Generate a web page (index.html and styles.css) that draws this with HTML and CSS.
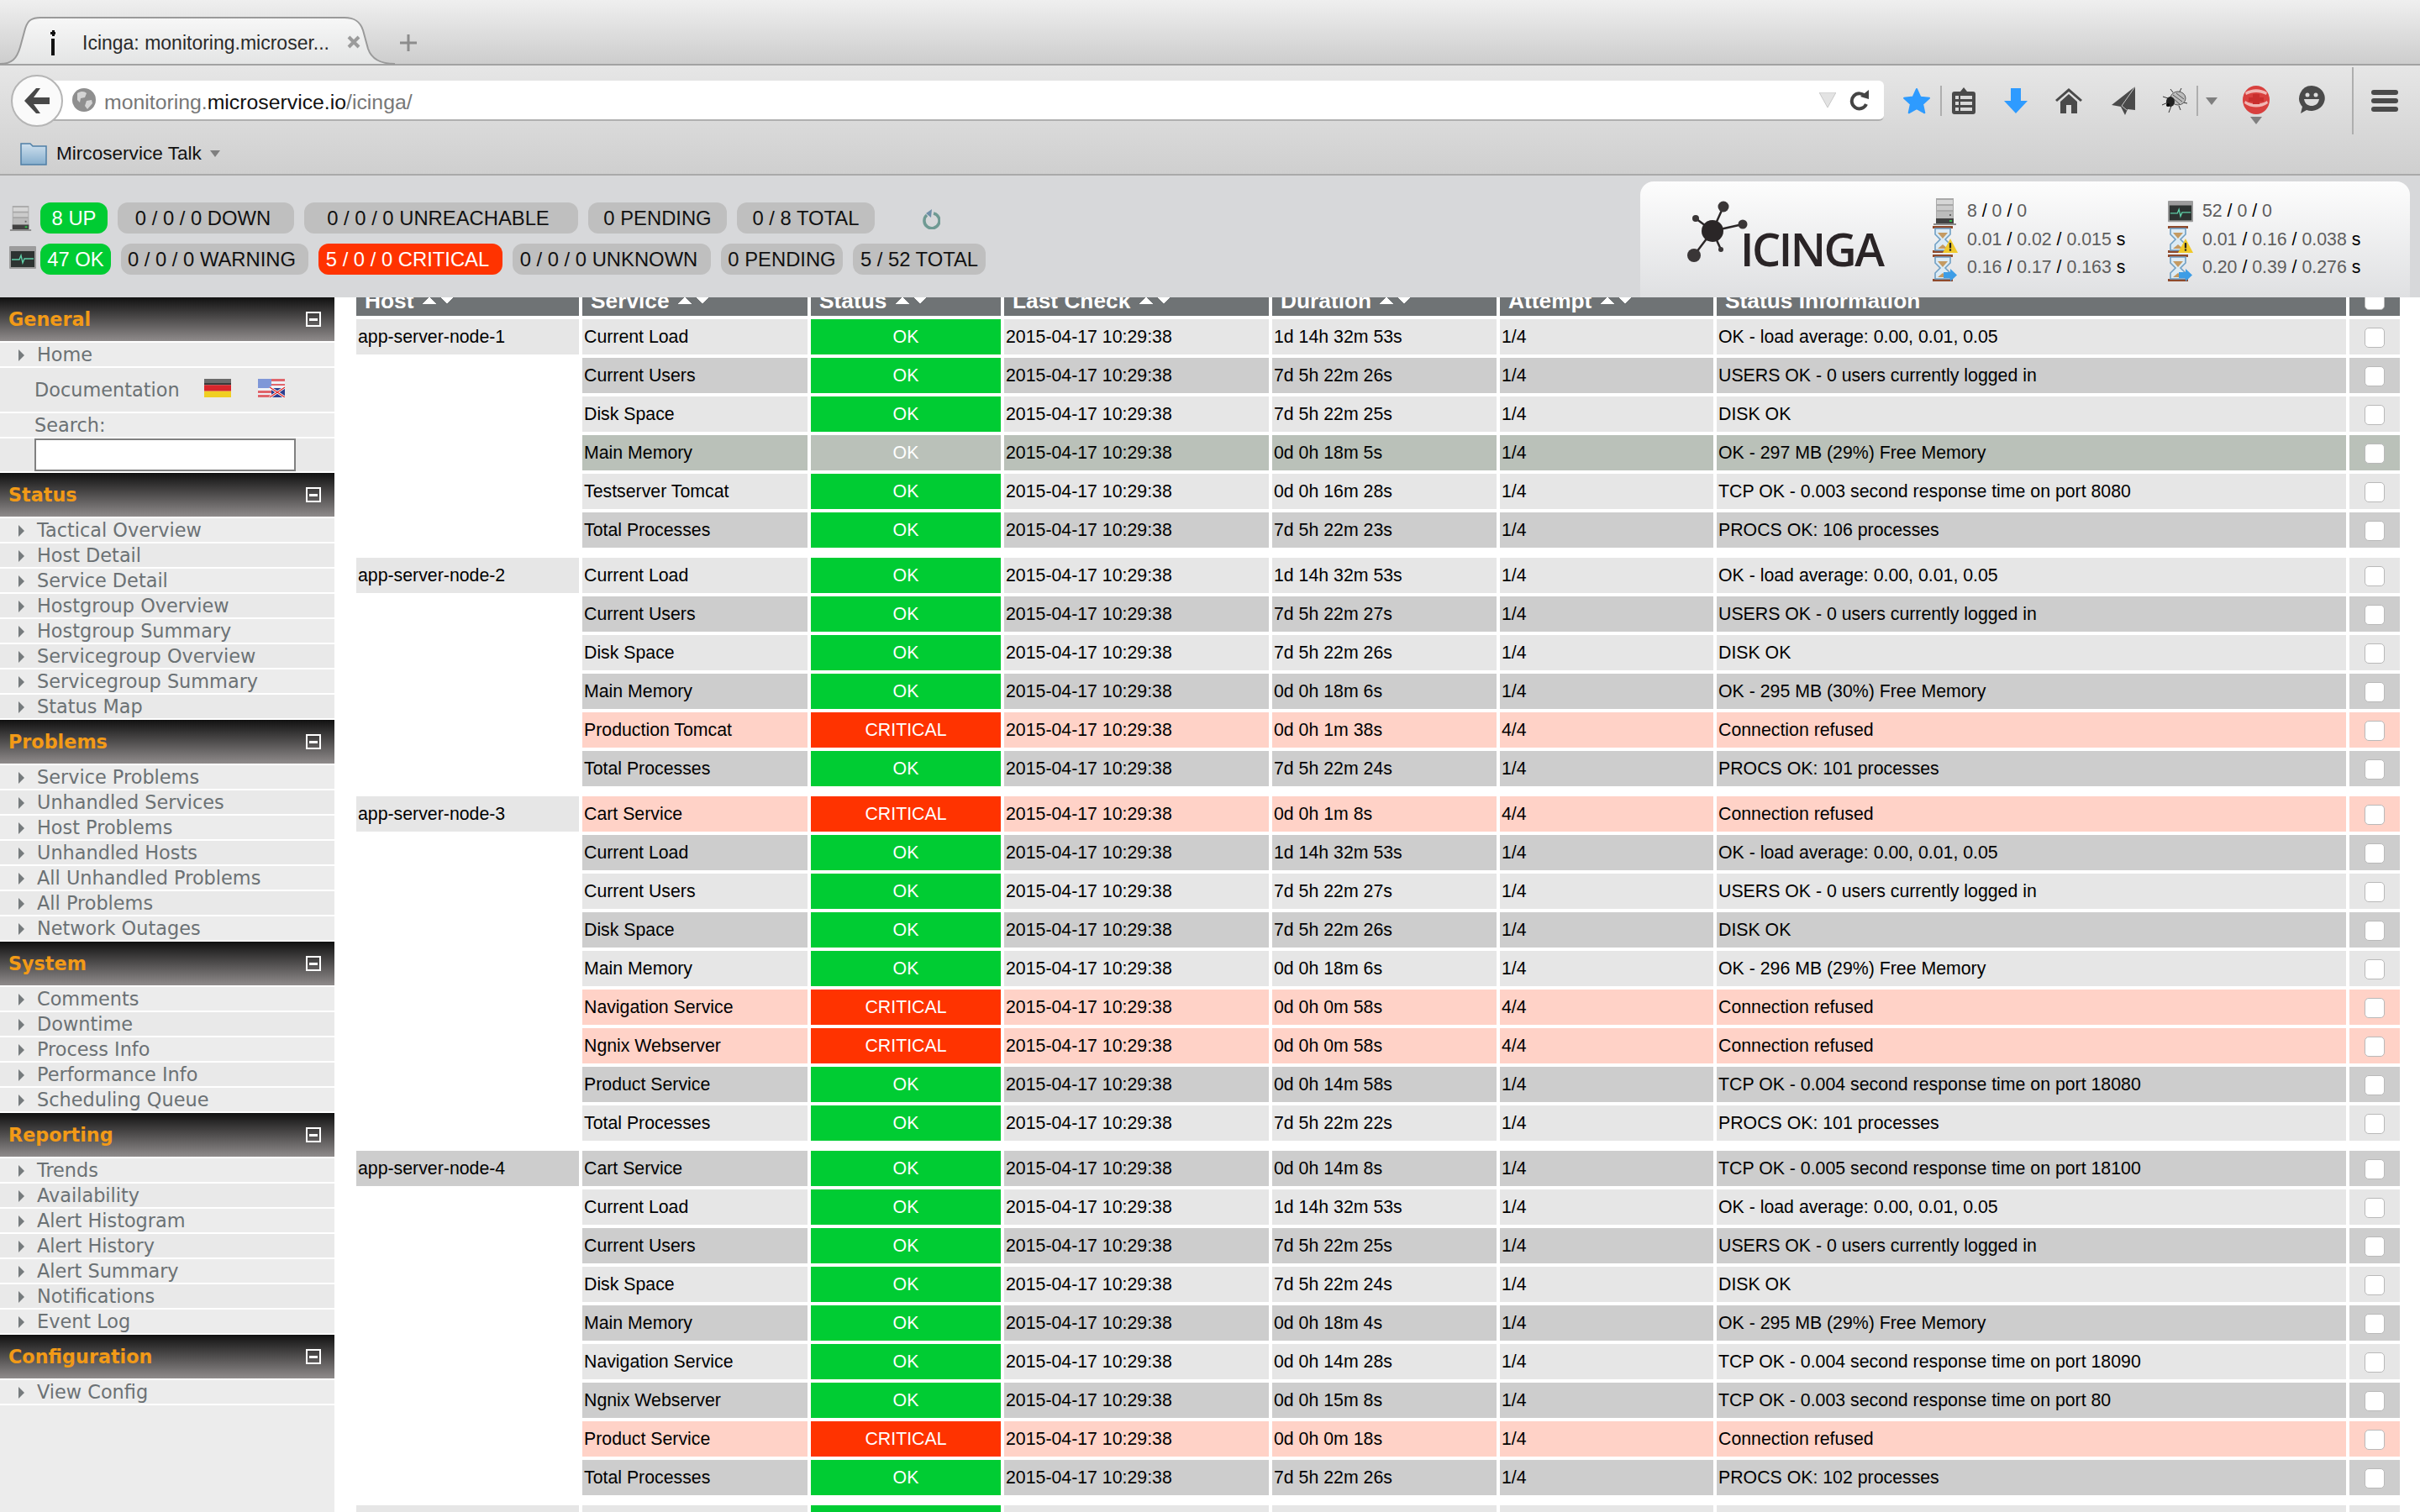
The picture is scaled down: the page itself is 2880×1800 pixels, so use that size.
FILE: index.html
```html
<!DOCTYPE html>
<html>
  <head>
    <title>Icinga: monitoring.microservice.io</title>
    <link rel="stylesheet" href="styles.css">
  </head>

  <body>
    <svg class="defs">
      <symbol id="ico-server" viewBox="0 0 30 32">
        <rect x="4" y="0" width="21" height="27" fill="#a9a9a9"/>
        <rect x="5" y="2" width="19" height="5" fill="#d6d6d6"/>
        <rect x="5" y="9" width="19" height="5" fill="#cbcbcb"/>
        <rect x="5" y="16" width="19" height="9" fill="#bcbcbc"/>
        <rect x="20" y="19" width="2" height="2" fill="#666"/>
        <rect x="4" y="24" width="21" height="6" fill="#414141"/>
        <rect x="20" y="26" width="3" height="2" fill="#2fc24a"/>
        <rect x="1" y="30" width="27" height="2" fill="#8a8a8a"/>
      </symbol>
      <symbol id="ico-monitor" viewBox="0 0 32 28">
        <rect x="0" y="0" width="32" height="27" rx="1" fill="#9c9c9c"/>
        <rect x="2" y="6" width="28" height="19" fill="#2d3331"/>
        <path d="M3 16h9l2-5 2 9 2-5h11" fill="none" stroke="#5fd0a8" stroke-width="1.4"/>
      </symbol>
      <symbol id="ico-glass" viewBox="0 0 30 32">
        <rect x="0" y="0" width="24" height="3" fill="#8f4a2c"/>
        <rect x="0" y="29" width="24" height="3" fill="#8f4a2c"/>
        <path d="M3 3h18v7l-6 6 6 6v7H3v-7l6-6-6-6z" fill="#dcebf5" stroke="#6f9fc4" stroke-width="1.6"/>
        <path d="M6 8h12l-6 7z" fill="#c49a62"/>
        <path d="M6 27l6-5 6 5z" fill="#c49a62"/>
      </symbol>
    </svg>

    <div class="strip">
      <div class="tab">
        <svg class="tab-shape" width="470" height="57" viewBox="0 0 470 57">
          <defs>
            <linearGradient id="tabfill" x1="0" y1="0" x2="0" y2="1">
              <stop offset="0" stop-color="#f7f7f7"/>
              <stop offset="1" stop-color="#e4e5e5"/>
            </linearGradient>
          </defs>
          <path d="M0 56C14 56 20 50 24 36L30 14C33 4 38 1 48 1L410 1C420 1 428 4 432 16L438 38C442 50 452 56 470 56" fill="url(#tabfill)" stroke="#9a9a9a" stroke-width="2"/>
        </svg>
        <svg class="favicon" width="6" height="30" viewBox="0 0 6 30">
          <rect x="0" y="2" width="6" height="3" fill="#111"/>
          <rect x="2" y="0" width="3" height="7" fill="#111"/>
          <rect x="1" y="10" width="4" height="20" fill="#111"/>
        </svg>
        <span class="tab-title">Icinga: monitoring.microser...</span>
        <svg class="tab-close" width="16" height="16" viewBox="0 0 16 16">
          <path d="M2 2l12 12M14 2L2 14" stroke="#9b9b9b" stroke-width="4"/>
        </svg>
      </div>
      <svg class="tab-new" width="20" height="20" viewBox="0 0 20 20">
        <path d="M10 0v20M0 10h20" stroke="#8c8c8c" stroke-width="3"/>
      </svg>
    </div>

    <div class="navbar">
      <div class="navrow">
        <div class="back">
          <svg width="30" height="30" viewBox="0 0 30 30">
            <path d="M14 0l5 0-8 11h19v8H11l8 11h-5L0 15z" fill="#484848"/>
          </svg>
        </div>
        <div class="urlbar">
          <svg class="globe" width="28" height="28" viewBox="0 0 28 28">
            <circle cx="14" cy="14" r="14" fill="#8f8f8f"/>
            <path d="M6 6c5-3 9-2 11 0l-2 5-5 1-1 5-3-3zM17 15l6-1 1 4-6 7-3-4z" fill="#d4d4d4"/>
          </svg>
          <span class="url"><span class="dim">monitoring.</span>microservice.io<span class="dim">/icinga/</span></span>
          <svg class="url-drop" width="20" height="18" viewBox="0 0 20 18">
            <path d="M0 0h20L10 18z" fill="#e3e3e3" stroke="#c8c8c8"/>
          </svg>
          <svg class="url-reload" width="24" height="26" viewBox="0 0 24 26">
            <path d="M19 9A9 9 0 1 0 20 18" fill="none" stroke="#444" stroke-width="4"/>
            <path d="M13 9L23 1v11z" fill="#444"/>
          </svg>
        </div>
        <div class="tools">
          <svg class="t-star" width="32" height="32" viewBox="0 0 32 32">
            <path d="M16 2l4.4 9.6 10.6 1.2-7.9 7.1 2.2 10.4L16 25.1 6.7 30.300l2.200-10.400L1 12.800l10.600-1.200z" fill="#2e9bff" stroke="#2e9bff" stroke-linejoin="round" stroke-width="2"/>
          </svg>
          <div class="t-sep s1"></div>
          <svg class="t-clip" width="28" height="32" viewBox="0 0 28 32">
            <path d="M3 5h7l4-5 4 5h7a3 3 0 0 1 3 3v21a3 3 0 0 1-3 3H3a3 3 0 0 1-3-3V8a3 3 0 0 1 3-3z" fill="#4a4a4a"/>
            <path d="M10 10h14v4H10zM10 17h14v4H10zM10 24h14v4H10z" fill="#d9d9d9"/>
            <path d="M4 10h4v4H4zM4 17h4v4H4zM4 24h4v4H4z" fill="#d9d9d9"/>
          </svg>
          <svg class="t-down" width="28" height="30" viewBox="0 0 28 30">
            <path d="M8 0h12v15h8L14 30 0 15h8z" fill="#2e9bff"/>
          </svg>
          <svg class="t-home" width="32" height="30" viewBox="0 0 32 30">
            <path d="M16 0l16 14-2 2L16 4 2 16l-2-2z" fill="#4a4a4a"/>
            <path d="M16 7l10 9v14h-7V20h-6v10H6V16z" fill="#4a4a4a"/>
          </svg>
          <svg class="t-send" width="28" height="34" viewBox="0 0 28 34">
            <path d="M28 0L0 22l11 2 5 10 3-7 9 1z" fill="#4a4a4a"/>
            <path d="M28 0L12 23l6 5" fill="none" stroke="#c9c9c9" stroke-width="1"/>
          </svg>
          <svg class="t-bug" width="32" height="30" viewBox="0 0 32 30">
            <path d="M8 12L2 10M8 17l-7 3M12 21l-3 8M20 6l7 1M22 16l9 2M21 21l2 5M14 5l-3-4M22 4l2-4" stroke="#333" fill="none"/>
            <ellipse cx="20" cy="12" rx="9" ry="8" fill="#bdbdbd" stroke="#555"/>
            <path d="M14 8l11 8M18 6l9 7M14 12l8 7" stroke="#555"/>
            <ellipse cx="11" cy="16" rx="5" ry="6" fill="#222"/>
            <circle cx="8" cy="20" r="2" fill="#000"/>
          </svg>
          <div class="t-sep s2"></div>
          <div class="t-tri tri1"></div>
          <div class="t-red">
            <svg width="32" height="34" viewBox="0 0 32 34">
              <ellipse cx="16" cy="17" rx="16" ry="17" fill="#d8403e"/>
              <path d="M3 8c8-5 18-5 26 0l-1 3c-8-4-16-4-24 0zM2 21c8 6 20 6 28 0l-1-3c-8 5-18 5-26 0z" fill="#f1b7b4"/>
              <path d="M12 10h8v4h5v5h-5v3h-8v-3H7v-5h5z" fill="#c92f2e"/>
            </svg>
            <div class="t-tri"></div>
          </div>
          <svg class="t-smile" width="32" height="34" viewBox="0 0 32 34">
            <path d="M16 0a16 15 0 1 1-6 29l-7 4 2-8A15 15 0 0 1 16 0z" fill="#4a4a4a"/>
            <circle cx="11" cy="11" r="2.500" fill="#ddd"/>
            <circle cx="21" cy="11" r="2.500" fill="#ddd"/>
            <path d="M7 16h18c-1 6-5 8-9 8s-8-2-9-8z" fill="#ddd"/>
          </svg>
          <div class="t-sep s3"></div>
          <div class="burger"><i></i><i></i><i></i></div>
        </div>
      </div>
      <div class="bookmarks">
        <svg width="32" height="28" viewBox="0 0 32 28">
          <defs>
            <linearGradient id="folder" x1="0" y1="0" x2="0" y2="1">
              <stop offset="0" stop-color="#cfe0ee"/>
              <stop offset="1" stop-color="#86aecd"/>
            </linearGradient>
          </defs>
          <path d="M1 2h11l3 3h16v22H1z" fill="url(#folder)" stroke="#4f7fa6" stroke-width="1.500"/>
        </svg>
        <span class="bm-label">Mircoservice Talk</span>
        <div class="t-tri small"></div>
      </div>
    </div>

    <div class="summary">
      <div class="totals">
        <div class="totals-row">
          <svg class="row-ico" width="28" height="32"><use href="#ico-server"/></svg>
          <span class="pill up w80">8 UP</span>
          <span class="pill lean w210">0 / 0 / 0 DOWN</span>
          <span class="pill lean w326">0 / 0 / 0 UNREACHABLE</span>
          <span class="pill w165">0 PENDING</span>
          <span class="pill w164">0 / 8 TOTAL</span>
          <svg class="refresh" width="22" height="24" viewBox="0 0 22 24">
            <path d="M6 7a9 9 0 1 0 8-2" fill="none" stroke="#6f9a93" stroke-width="3.500"/>
            <path d="M12 0l-1 10-6-5z" fill="#6f8fa8"/>
          </svg>
        </div>
        <div class="totals-row">
          <svg class="row-ico" width="32" height="28"><use href="#ico-monitor"/></svg>
          <span class="pill up w84">47 OK</span>
          <span class="pill lean w223">0 / 0 / 0 WARNING</span>
          <span class="pill lean crit w219">5 / 0 / 0 CRITICAL</span>
          <span class="pill lean w236">0 / 0 / 0 UNKNOWN</span>
          <span class="pill w145">0 PENDING</span>
          <span class="pill w158">5 / 52 TOTAL</span>
        </div>
      </div>

      <div class="panel">
        <div class="logo">
          <svg width="76" height="76" viewBox="0 0 76 76">
            <path d="M32 39L45 10M32 39L12 24M32 39L68 31M32 39L10 68M32 39L42 61" stroke="#2a2627" stroke-width="2.500"/>
            <circle cx="32" cy="39" r="13" fill="#2a2627"/>
            <circle cx="45" cy="10" r="6.500" fill="#3a3637"/>
            <circle cx="12" cy="24" r="4" fill="#3a3637"/>
            <circle cx="68" cy="31" r="5.500" fill="#3a3637"/>
            <circle cx="10" cy="68" r="8" fill="#3a3637"/>
            <circle cx="42" cy="61" r="3" fill="#3a3637"/>
          </svg>
          <span class="logo-text">ICINGA</span>
        </div>
        <div class="stats">
          <div class="stat-col">
            <div class="stat"><svg width="30" height="32"><use href="#ico-server"/></svg><span>8 <i>/</i> 0 <i>/</i> 0</span></div>
            <div class="stat"><div class="glass"><svg width="30" height="32"><use href="#ico-glass"/></svg><svg class="badge" width="18" height="17" viewBox="0 0 16 15"><path d="M8 0l8 15H0z" fill="#f0c92a"/><rect x="7" y="4.500" width="2" height="5.500" fill="#222"/><rect x="7" y="11" width="2" height="2" fill="#222"/></svg></div><span>0.01 <i>/</i> 0.02 <i>/</i> 0.015 <b>s</b></span></div>
            <div class="stat"><div class="glass"><svg width="30" height="32"><use href="#ico-glass"/></svg><svg class="badge" width="18" height="15" viewBox="0 0 16 15"><path d="M0 4h8V0l8 7.500L8 15v-4H0z" fill="#3d9de6"/></svg></div><span>0.16 <i>/</i> 0.17 <i>/</i> 0.163 <b>s</b></span></div>
          </div>
          <div class="stat-col">
            <div class="stat"><svg width="32" height="28"><use href="#ico-monitor"/></svg><span>52 <i>/</i> 0 <i>/</i> 0</span></div>
            <div class="stat"><div class="glass"><svg width="30" height="32"><use href="#ico-glass"/></svg><svg class="badge" width="18" height="17" viewBox="0 0 16 15"><path d="M8 0l8 15H0z" fill="#f0c92a"/><rect x="7" y="4.500" width="2" height="5.500" fill="#222"/><rect x="7" y="11" width="2" height="2" fill="#222"/></svg></div><span>0.01 <i>/</i> 0.16 <i>/</i> 0.038 <b>s</b></span></div>
            <div class="stat"><div class="glass"><svg width="30" height="32"><use href="#ico-glass"/></svg><svg class="badge" width="18" height="15" viewBox="0 0 16 15"><path d="M0 4h8V0l8 7.500L8 15v-4H0z" fill="#3d9de6"/></svg></div><span>0.20 <i>/</i> 0.39 <i>/</i> 0.276 <b>s</b></span></div>
          </div>
        </div>
      </div>
    </div>

    <div class="main">
      <div class="side">
        <div class="side-head"><span>General</span><i class="toggle"></i></div>
        <ul class="menu">
          <li>Home</li>
          <li class="plain doc">
            Documentation
            <svg class="flag first" width="32" height="22" viewBox="0 0 32 22">
              <rect width="32" height="7.300" fill="#3a3a3a"/>
              <rect y="7.300" width="32" height="7.400" fill="#d8262b"/>
              <rect y="14.700" width="32" height="7.300" fill="#f0cf22"/>
              <rect width="32" height="5" fill="#fff" opacity=".25"/>
            </svg>
            <svg class="flag" width="32" height="22" viewBox="0 0 32 22">
              <rect width="32" height="22" fill="#eef0f6"/>
              <rect width="16" height="11" fill="#7f97d8"/>
              <path d="M16 0h16v3H16zM16 6h16v2H16zM0 14h16v3H0zM0 19h16v3H0z" fill="#e0656b"/>
              <path d="M16 11h16v11H16z" fill="#2c3f8f"/>
              <path d="M14 22L32 10M14 10l18 12" stroke="#fff" stroke-width="3"/>
              <path d="M14 22L32 10M14 10l18 12" stroke="#d22" stroke-width="1.200"/>
            </svg>
          </li>
          <li class="plain">Search:</li>
          <li class="plain search"><input class="search-box" type="text"></li>
        </ul>

        <div class="side-head"><span>Status</span><i class="toggle"></i></div>
        <ul class="menu">
          <li>Tactical Overview</li>
          <li>Host Detail</li>
          <li>Service Detail</li>
          <li>Hostgroup Overview</li>
          <li>Hostgroup Summary</li>
          <li>Servicegroup Overview</li>
          <li>Servicegroup Summary</li>
          <li>Status Map</li>
        </ul>

        <div class="side-head"><span>Problems</span><i class="toggle"></i></div>
        <ul class="menu">
          <li>Service Problems</li>
          <li>Unhandled Services</li>
          <li>Host Problems</li>
          <li>Unhandled Hosts</li>
          <li>All Unhandled Problems</li>
          <li>All Problems</li>
          <li>Network Outages</li>
        </ul>

        <div class="side-head"><span>System</span><i class="toggle"></i></div>
        <ul class="menu">
          <li>Comments</li>
          <li>Downtime</li>
          <li>Process Info</li>
          <li>Performance Info</li>
          <li>Scheduling Queue</li>
        </ul>

        <div class="side-head"><span>Reporting</span><i class="toggle"></i></div>
        <ul class="menu">
          <li>Trends</li>
          <li>Availability</li>
          <li>Alert Histogram</li>
          <li>Alert History</li>
          <li>Alert Summary</li>
          <li>Notifications</li>
          <li>Event Log</li>
        </ul>

        <div class="side-head"><span>Configuration</span><i class="toggle"></i></div>
        <ul class="menu">
          <li>View Config</li>
        </ul>
      </div>

      <div class="content">
        <table class="services">
          <colgroup>
            <col class="c-host"><col class="c-service"><col class="c-status"><col class="c-check">
            <col class="c-duration"><col class="c-attempt"><col class="c-info"><col class="c-box">
          </colgroup>
          <thead>
            <tr>
              <th>Host <i class="sort"></i></th>
              <th>Service <i class="sort"></i></th>
              <th>Status <i class="sort"></i></th>
              <th>Last Check <i class="sort"></i></th>
              <th>Duration <i class="sort"></i></th>
              <th>Attempt <i class="sort"></i></th>
              <th>Status Information</th>
              <th class="box"><i class="check"></i></th>
            </tr>
          </thead>
          <tbody>
            <tr class="light"><td>app-server-node-1</td><td>Current Load</td><td class="ok">OK</td><td>2015-04-17 10:29:38</td><td>1d 14h 32m 53s</td><td>1/4</td><td>OK - load average: 0.00, 0.01, 0.05</td><td class="box"><i class="check"></i></td></tr>
            <tr class="dark"><td class="none"></td><td>Current Users</td><td class="ok">OK</td><td>2015-04-17 10:29:38</td><td>7d 5h 22m 26s</td><td>1/4</td><td>USERS OK - 0 users currently logged in</td><td class="box"><i class="check"></i></td></tr>
            <tr class="light"><td class="none"></td><td>Disk Space</td><td class="ok">OK</td><td>2015-04-17 10:29:38</td><td>7d 5h 22m 25s</td><td>1/4</td><td>DISK OK</td><td class="box"><i class="check"></i></td></tr>
            <tr class="hover"><td class="none"></td><td>Main Memory</td><td class="ok">OK</td><td>2015-04-17 10:29:38</td><td>0d 0h 18m 5s</td><td>1/4</td><td>OK - 297 MB (29%) Free Memory</td><td class="box"><i class="check"></i></td></tr>
            <tr class="light"><td class="none"></td><td>Testserver Tomcat</td><td class="ok">OK</td><td>2015-04-17 10:29:38</td><td>0d 0h 16m 28s</td><td>1/4</td><td>TCP OK - 0.003 second response time on port 8080</td><td class="box"><i class="check"></i></td></tr>
            <tr class="dark"><td class="none"></td><td>Total Processes</td><td class="ok">OK</td><td>2015-04-17 10:29:38</td><td>7d 5h 22m 23s</td><td>1/4</td><td>PROCS OK: 106 processes</td><td class="box"><i class="check"></i></td></tr>
            <tr class="spacer"><td colspan="8"></td></tr>

            <tr class="light"><td>app-server-node-2</td><td>Current Load</td><td class="ok">OK</td><td>2015-04-17 10:29:38</td><td>1d 14h 32m 53s</td><td>1/4</td><td>OK - load average: 0.00, 0.01, 0.05</td><td class="box"><i class="check"></i></td></tr>
            <tr class="dark"><td class="none"></td><td>Current Users</td><td class="ok">OK</td><td>2015-04-17 10:29:38</td><td>7d 5h 22m 27s</td><td>1/4</td><td>USERS OK - 0 users currently logged in</td><td class="box"><i class="check"></i></td></tr>
            <tr class="light"><td class="none"></td><td>Disk Space</td><td class="ok">OK</td><td>2015-04-17 10:29:38</td><td>7d 5h 22m 26s</td><td>1/4</td><td>DISK OK</td><td class="box"><i class="check"></i></td></tr>
            <tr class="dark"><td class="none"></td><td>Main Memory</td><td class="ok">OK</td><td>2015-04-17 10:29:38</td><td>0d 0h 18m 6s</td><td>1/4</td><td>OK - 295 MB (30%) Free Memory</td><td class="box"><i class="check"></i></td></tr>
            <tr class="bad"><td class="none"></td><td>Production Tomcat</td><td class="critical">CRITICAL</td><td>2015-04-17 10:29:38</td><td>0d 0h 1m 38s</td><td>4/4</td><td>Connection refused</td><td class="box"><i class="check"></i></td></tr>
            <tr class="dark"><td class="none"></td><td>Total Processes</td><td class="ok">OK</td><td>2015-04-17 10:29:38</td><td>7d 5h 22m 24s</td><td>1/4</td><td>PROCS OK: 101 processes</td><td class="box"><i class="check"></i></td></tr>
            <tr class="spacer"><td colspan="8"></td></tr>

            <tr class="bad"><td class="host-light">app-server-node-3</td><td>Cart Service</td><td class="critical">CRITICAL</td><td>2015-04-17 10:29:38</td><td>0d 0h 1m 8s</td><td>4/4</td><td>Connection refused</td><td class="box"><i class="check"></i></td></tr>
            <tr class="dark"><td class="none"></td><td>Current Load</td><td class="ok">OK</td><td>2015-04-17 10:29:38</td><td>1d 14h 32m 53s</td><td>1/4</td><td>OK - load average: 0.00, 0.01, 0.05</td><td class="box"><i class="check"></i></td></tr>
            <tr class="light"><td class="none"></td><td>Current Users</td><td class="ok">OK</td><td>2015-04-17 10:29:38</td><td>7d 5h 22m 27s</td><td>1/4</td><td>USERS OK - 0 users currently logged in</td><td class="box"><i class="check"></i></td></tr>
            <tr class="dark"><td class="none"></td><td>Disk Space</td><td class="ok">OK</td><td>2015-04-17 10:29:38</td><td>7d 5h 22m 26s</td><td>1/4</td><td>DISK OK</td><td class="box"><i class="check"></i></td></tr>
            <tr class="light"><td class="none"></td><td>Main Memory</td><td class="ok">OK</td><td>2015-04-17 10:29:38</td><td>0d 0h 18m 6s</td><td>1/4</td><td>OK - 296 MB (29%) Free Memory</td><td class="box"><i class="check"></i></td></tr>
            <tr class="bad"><td class="none"></td><td>Navigation Service</td><td class="critical">CRITICAL</td><td>2015-04-17 10:29:38</td><td>0d 0h 0m 58s</td><td>4/4</td><td>Connection refused</td><td class="box"><i class="check"></i></td></tr>
            <tr class="bad"><td class="none"></td><td>Ngnix Webserver</td><td class="critical">CRITICAL</td><td>2015-04-17 10:29:38</td><td>0d 0h 0m 58s</td><td>4/4</td><td>Connection refused</td><td class="box"><i class="check"></i></td></tr>
            <tr class="dark"><td class="none"></td><td>Product Service</td><td class="ok">OK</td><td>2015-04-17 10:29:38</td><td>0d 0h 14m 58s</td><td>1/4</td><td>TCP OK - 0.004 second response time on port 18080</td><td class="box"><i class="check"></i></td></tr>
            <tr class="light"><td class="none"></td><td>Total Processes</td><td class="ok">OK</td><td>2015-04-17 10:29:38</td><td>7d 5h 22m 22s</td><td>1/4</td><td>PROCS OK: 101 processes</td><td class="box"><i class="check"></i></td></tr>
            <tr class="spacer"><td colspan="8"></td></tr>

            <tr class="dark"><td>app-server-node-4</td><td>Cart Service</td><td class="ok">OK</td><td>2015-04-17 10:29:38</td><td>0d 0h 14m 8s</td><td>1/4</td><td>TCP OK - 0.005 second response time on port 18100</td><td class="box"><i class="check"></i></td></tr>
            <tr class="light"><td class="none"></td><td>Current Load</td><td class="ok">OK</td><td>2015-04-17 10:29:38</td><td>1d 14h 32m 53s</td><td>1/4</td><td>OK - load average: 0.00, 0.01, 0.05</td><td class="box"><i class="check"></i></td></tr>
            <tr class="dark"><td class="none"></td><td>Current Users</td><td class="ok">OK</td><td>2015-04-17 10:29:38</td><td>7d 5h 22m 25s</td><td>1/4</td><td>USERS OK - 0 users currently logged in</td><td class="box"><i class="check"></i></td></tr>
            <tr class="light"><td class="none"></td><td>Disk Space</td><td class="ok">OK</td><td>2015-04-17 10:29:38</td><td>7d 5h 22m 24s</td><td>1/4</td><td>DISK OK</td><td class="box"><i class="check"></i></td></tr>
            <tr class="dark"><td class="none"></td><td>Main Memory</td><td class="ok">OK</td><td>2015-04-17 10:29:38</td><td>0d 0h 18m 4s</td><td>1/4</td><td>OK - 295 MB (29%) Free Memory</td><td class="box"><i class="check"></i></td></tr>
            <tr class="light"><td class="none"></td><td>Navigation Service</td><td class="ok">OK</td><td>2015-04-17 10:29:38</td><td>0d 0h 14m 28s</td><td>1/4</td><td>TCP OK - 0.004 second response time on port 18090</td><td class="box"><i class="check"></i></td></tr>
            <tr class="dark"><td class="none"></td><td>Ngnix Webserver</td><td class="ok">OK</td><td>2015-04-17 10:29:38</td><td>0d 0h 15m 8s</td><td>1/4</td><td>TCP OK - 0.003 second response time on port 80</td><td class="box"><i class="check"></i></td></tr>
            <tr class="bad"><td class="none"></td><td>Product Service</td><td class="critical">CRITICAL</td><td>2015-04-17 10:29:38</td><td>0d 0h 0m 18s</td><td>1/4</td><td>Connection refused</td><td class="box"><i class="check"></i></td></tr>
            <tr class="dark"><td class="none"></td><td>Total Processes</td><td class="ok">OK</td><td>2015-04-17 10:29:38</td><td>7d 5h 22m 26s</td><td>1/4</td><td>PROCS OK: 102 processes</td><td class="box"><i class="check"></i></td></tr>
            <tr class="spacer"><td colspan="8"></td></tr>

            <tr class="light"><td></td><td></td><td class="ok"></td><td></td><td></td><td></td><td></td><td class="box"></td></tr>
          </tbody>
        </table>
      </div>
    </div>
  </body>
</html>
```

FILE: styles.css
```css
body, html {
  margin: 0;
  padding: 0;
  height: 1800px;
  overflow: hidden;
}
body {
  display: flex;
  flex-direction: column;
  font-family: "Liberation Sans", Arial, sans-serif;
  color: #000;
  background: #fff;
}
.defs {
  width: 0;
  height: 0;
  display: block;
}

/* browser chrome */
.strip {
  height: 78px;
  box-sizing: border-box;
  display: flex;
  align-items: flex-start;
  background: linear-gradient(#efefef, #cdcdcd);
  border-bottom: 2px solid #a2a2a2;
}
.tab {
  position: relative;
  width: 470px;
  height: 57px;
  margin-top: 20px;
  display: flex;
  align-items: center;
  z-index: 1;
}
.tab-shape {
  position: absolute;
  left: 0;
  top: 0;
}
.favicon {
  position: relative;
  margin-left: 60px;
  margin-top: 4px;
}
.tab-title {
  position: relative;
  margin-left: 32px;
  margin-top: 6px;
  font-size: 23px;
  color: #2a2a2a;
  white-space: nowrap;
}
.tab-close {
  position: relative;
  margin-left: 21px;
  margin-top: 2px;
}
.tab-new {
  margin-top: 41px;
  margin-left: 6px;
}
.navbar {
  height: 131px;
  box-sizing: border-box;
  background: linear-gradient(#e6e6e6, #cfcfcf);
  border-bottom: 2px solid #a9a9a9;
}
.navrow {
  height: 84px;
  display: flex;
  align-items: center;
}
.back {
  width: 62px;
  height: 62px;
  box-sizing: border-box;
  margin-left: 13px;
  border: 2px solid #b5b5b5;
  border-radius: 50%;
  background: #fafafa;
  display: flex;
  align-items: center;
  justify-content: center;
  position: relative;
  z-index: 1;
}
.urlbar {
  flex: 1;
  height: 48px;
  box-sizing: border-box;
  margin-left: -15px;
  padding-left: 26px;
  display: flex;
  align-items: center;
  background: #fff;
  border-bottom: 2px solid #b0b0b0;
  border-radius: 0 6px 6px 0;
}
.url {
  margin-left: 10px;
  margin-top: 5px;
  font-size: 24.8px;
  color: #111;
  white-space: nowrap;
}
.dim {
  color: #777;
}
.url-drop {
  margin-left: auto;
}
.url-reload {
  margin-left: 16px;
  margin-right: 17px;
}
.tools {
  width: 638px;
  height: 84px;
  display: flex;
  align-items: center;
}
.t-star { margin-left: 23px; }
.t-sep {
  width: 2px;
  height: 36px;
  background: #aeaeae;
}
.t-sep.s1 { margin-left: 12px; }
.t-clip { margin-left: 12px; }
.t-down { margin-left: 34px; }
.t-home { margin-left: 33px; }
.t-send { margin-left: 35px; }
.t-bug { margin-left: 31px; }
.t-sep.s2 { margin-left: 10px; }
.t-tri {
  width: 0;
  height: 0;
  border-left: 7px solid transparent;
  border-right: 7px solid transparent;
  border-top: 9px solid #7f7f7f;
}
.tri1 { margin-left: 9px; }
.t-red {
  margin-left: 30px;
  display: flex;
  flex-direction: column;
  align-items: center;
  gap: 3px;
  padding-top: 10px;
}
.t-smile { margin-left: 34px; margin-top: -3px; }
.t-sep.s3 {
  margin-left: 32px;
  height: 80px;
}
.burger {
  margin-left: 21px;
  display: flex;
  flex-direction: column;
  gap: 4px;
}
.burger i {
  display: block;
  width: 32px;
  height: 6px;
  border-radius: 3px;
  background: #4a4a4a;
}
.bookmarks {
  height: 42px;
  padding-left: 24px;
  display: flex;
  align-items: center;
}
.bm-label {
  margin-left: 11px;
  font-size: 22.6px;
  color: #111;
}
.t-tri.small {
  margin-left: 10px;
  border-left-width: 6px;
  border-right-width: 6px;
  border-top-width: 8px;
}

/* host and service totals */
.summary {
  height: 145px;
  flex: none;
  display: flex;
  justify-content: space-between;
  background: #d7d8da;
}
.totals {
  padding-top: 32px;
  display: flex;
  flex-direction: column;
  gap: 12px;
}
.totals-row {
  display: flex;
  align-items: center;
  gap: 12px;
  height: 37px;
  position: relative;
  padding-left: 48px;
}
.row-ico {
  position: absolute;
  left: 11px;
  top: 3px;
}
.pill {
  height: 37px;
  line-height: 37px;
  box-sizing: border-box;
  text-align: center;
  font-size: 23.8px;
  white-space: nowrap;
  border-radius: 12px;
  background: #bfbfbf;
  color: #111;
}
.pill.lean {
  padding-right: 7px;
}
.pill.up {
  background: #00cc33;
  color: #fff;
}
.pill.crit {
  background: #ff3300;
  color: #fff;
}
.w80 { width: 80px; }
.w84 { width: 84px; }
.w145 { width: 145px; }
.w158 { width: 158px; }
.w164 { width: 164px; }
.w165 { width: 165px; }
.w210 { width: 210px; }
.w219 { width: 219px; }
.w223 { width: 223px; }
.w236 { width: 236px; }
.w326 { width: 326px; }
.refresh { margin-left: 44px; margin-top: 3px; }

.panel {
  width: 916px;
  height: 138px;
  box-sizing: border-box;
  margin-top: 7px;
  margin-right: 12px;
  display: flex;
  border-radius: 16px 16px 0 0;
  background: linear-gradient(#fdfdfd, #dfe0e2);
}
.logo {
  width: 348px;
  box-sizing: border-box;
  padding-left: 54px;
  padding-top: 20px;
  display: flex;
  align-items: flex-start;
}
.logo-text {
  margin-left: -11px;
  margin-top: 40px;
  font-family: "Open Sans", sans-serif;
  font-size: 54px;
  font-weight: 600;
  line-height: 40px;
  letter-spacing: -2.500px;
  color: #2a2426;
}
.stats {
  display: flex;
  padding-top: 19px;
}
.stat-col {
  width: 280px;
}
.stat {
  height: 33.500px;
  display: flex;
  align-items: center;
  gap: 11px;
  font-size: 21.3px;
  color: #5d5d5d;
  white-space: nowrap;
}
.stat > svg {
  width: 30px;
  flex: none;
}
.stat i {
  font-style: normal;
  color: #000;
}
.stat b {
  font-weight: normal;
  color: #000;
}
.glass {
  position: relative;
  width: 30px;
  height: 32px;
  flex: none;
}
.badge {
  position: absolute;
  right: 0;
  bottom: 0;
}

/* layout below the chrome */
.main {
  flex: 1;
  display: flex;
  overflow: hidden;
}
.side {
  width: 398px;
  flex: none;
  background: #ececec;
  font-family: "DejaVu Sans", Verdana, sans-serif;
}
.side-head {
  height: 52px;
  box-sizing: border-box;
  padding: 0 16px 0 10px;
  display: flex;
  align-items: center;
  justify-content: space-between;
  background: linear-gradient(#111, #8f8b8b);
  margin-bottom: 2px;
  font-size: 22.3px;
  font-weight: bold;
  color: #f29a17;
  box-shadow: 0 2px 0 #fff;
}
.toggle {
  display: block;
  width: 18px;
  height: 18px;
  box-sizing: border-box;
  border: 2px solid #fff;
  background: linear-gradient(#fff, #fff) center / 10px 3px no-repeat;
}
.menu {
  list-style: none;
  margin: 0;
  padding: 0;
}
.menu li {
  height: 28px;
  line-height: 29px;
  margin-bottom: 2px;
  padding-left: 44px;
  position: relative;
  font-size: 22.4px;
  color: #6b7174;
  background: #e9e9e9;
  box-shadow: 0 2px 0 #fff;
  white-space: nowrap;
}
.menu li:nth-child(odd) {
  background: #ececec;
}
.menu li::before {
  content: "";
  position: absolute;
  left: 22px;
  top: 8px;
  border-left: 7px solid #767b7d;
  border-top: 7px solid transparent;
  border-bottom: 7px solid transparent;
}
.menu li.plain {
  padding-left: 41px;
}
.menu li.plain::before {
  display: none;
}
.menu li.doc {
  height: 52px;
  display: flex;
  align-items: center;
}
.flag.first { margin-left: 29px; }
.flag { margin-left: 32px; margin-top: -4px; }
.menu li.search {
  height: 39px;
  line-height: 0;
}
.search-box {
  width: 311px;
  height: 39px;
  box-sizing: border-box;
  margin: 0;
  padding: 0;
  border: 2px solid #808080;
  background: #fff;
}

/* service table */
.content {
  flex: 1;
  padding-left: 22px;
  overflow: hidden;
}
.services {
  width: 2440px;
  margin-top: -24px;
  table-layout: fixed;
  border-collapse: separate;
  border-spacing: 4px;
  font-size: 21.3px;
}
.c-host { width: 265px; }
.c-service { width: 268px; }
.c-status { width: 226px; }
.c-check { width: 315px; }
.c-duration { width: 267px; }
.c-attempt { width: 254px; }
.c-info { width: 749px; }
.c-box { width: 60px; }
.services th {
  height: 42px;
  box-sizing: border-box;
  padding: 6px 0 0 10px;
  text-align: left;
  font-size: 26.3px;
  font-weight: bold;
  color: #fff;
  background: #6f7375;
  white-space: nowrap;
}
.sort {
  display: inline-block;
  width: 38px;
  height: 9px;
  margin-left: 2px;
  vertical-align: 5px;
  background:
    linear-gradient(to bottom right, transparent 50%, #fff 51%) 0 0 / 9px 9px no-repeat,
    linear-gradient(to bottom left, transparent 50%, #fff 51%) 9px 0 / 9px 9px no-repeat,
    linear-gradient(to top right, transparent 50%, #fff 51%) 22px 0 / 8px 9px no-repeat,
    linear-gradient(to top left, transparent 50%, #fff 51%) 30px 0 / 8px 9px no-repeat;
}
.services td {
  height: 42px;
  box-sizing: border-box;
  padding: 0 0 0 2px;
  white-space: nowrap;
}
.services tr.light td { background: #e6e6e6; }
.services tr.dark td { background: #cdcdcd; }
.services tr.hover td { background: #bac1b9; }
.services tr.bad td { background: #ffd2c7; }
.services tr td.host-light { background: #e6e6e6; }
.services tr td.none { background: #fff; }
.services tr td.ok {
  padding: 0;
  text-align: center;
  color: #fff;
  background: #00cc33;
}
.services tr.hover td.ok { background: #bac1b9; }
.services tr td.critical {
  padding: 0;
  text-align: center;
  color: #fff;
  background: #ff3300;
}
.services tr.spacer td {
  height: 4px;
  padding: 0;
  background: #fff;
}
.services .box {
  padding: 0;
  text-align: center;
}
.check {
  display: inline-block;
  width: 24px;
  height: 24px;
  box-sizing: border-box;
  vertical-align: middle;
  border: 1px solid #b9b9b9;
  border-radius: 5px;
  background: #fff;
}
```
